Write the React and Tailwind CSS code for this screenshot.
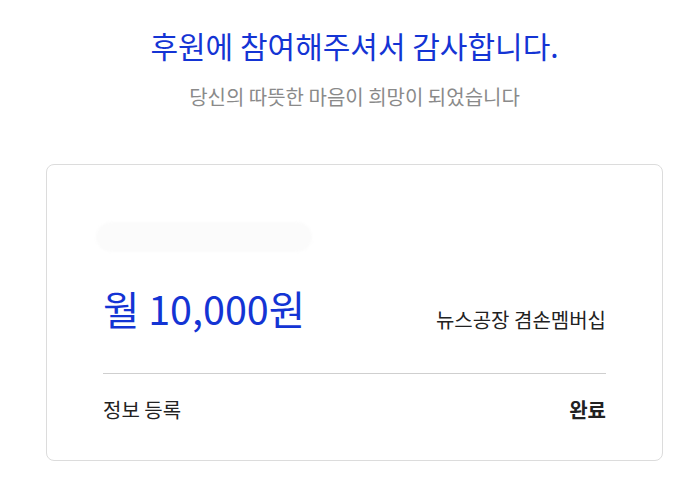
import React from 'react'

const font = { fontFamily: '"Noto Sans CJK KR", "Noto Sans", sans-serif' }

const DonationComplete = () => {
  return (
    <div className="w-[696px] min-h-[481px] bg-white" style={font}>
      <div className="pt-[25px] pl-[46px] w-[663px]">
        <h1 className="text-center text-[30px] leading-[40px] text-[#1434d4] font-normal">
          후원에 참여해주셔서 감사합니다.
        </h1>
        <p className="mt-[18px] text-center text-[20px] leading-[28px] text-[#8a8a8a]">
          당신의 따뜻한 마음이 희망이 되었습니다
        </p>

        <div className="mt-[53px] w-[617px] rounded-lg border border-[#dcdcdc] bg-white px-14 pt-[57px] pb-[38px]">
          {/* loading placeholder for member name */}
          <div className="-ml-[7px] h-[30px] w-[216px] rounded-full bg-[#fbfbfb] blur-[1px]" />

          <div className="mt-[32px] flex items-end justify-between">
            <span className="text-[39.5px] leading-[48px] text-[#1434d4]">월 10,000원</span>
            <span className="text-[20px] leading-[24px] text-[#222]">뉴스공장 겸손멤버십</span>
          </div>

          <div className="mt-[41px] h-px bg-[#cfcfcf]" />

          <div className="mt-[24px] flex items-center justify-between text-[20px] leading-[24px] text-[#222]">
            <span>정보 등록</span>
            <span className="font-bold">완료</span>
          </div>
        </div>
      </div>
    </div>
  )
}

export default function App() {
  return <DonationComplete />
}
